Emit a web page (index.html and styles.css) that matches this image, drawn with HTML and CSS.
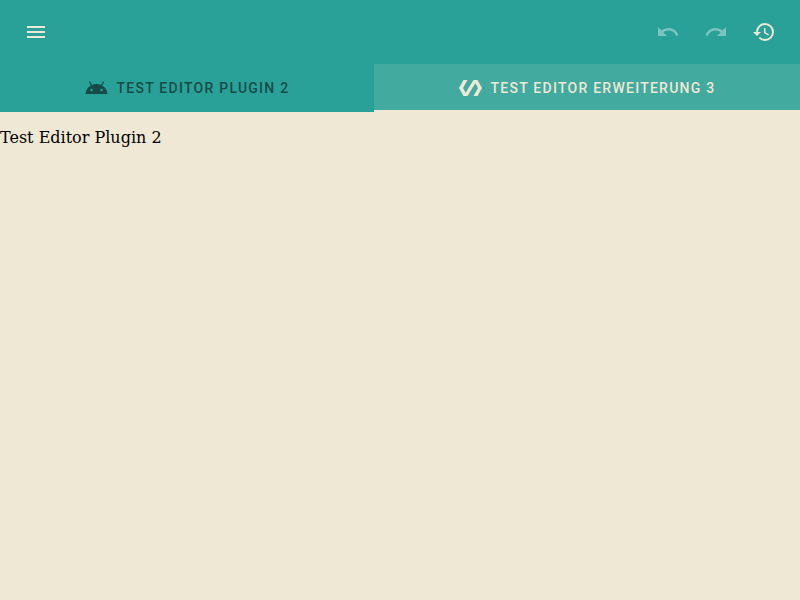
FILE: index.html
```
<!DOCTYPE html>
<html lang="de">
<head>
<meta charset="utf-8">
<title>Editor</title>
<link rel="stylesheet" href="styles.css">
</head>
<body>
<header class="bar">
  <button class="icon-button" aria-label="Menu"><svg viewBox="0 0 24 24"><path d="M3 18h18v-2H3v2zm0-5h18v-2H3v2zm0-7v2h18V6H3z"/></svg></button>
  <div class="actions">
    <button class="icon-button" disabled aria-label="Undo"><svg viewBox="0 0 24 24"><path d="M12.5 8c-2.65 0-5.05.99-6.9 2.6L2 7v9h9l-3.62-3.62c1.39-1.16 3.16-1.88 5.12-1.88 3.54 0 6.55 2.31 7.6 5.5l2.37-.78C21.08 11.03 17.15 8 12.5 8z"/></svg></button>
    <button class="icon-button" disabled aria-label="Redo"><svg viewBox="0 0 24 24"><path d="M18.4 10.6C16.55 8.99 14.15 8 11.5 8c-4.65 0-8.58 3.03-9.96 7.22L3.9 16c1.05-3.19 4.05-5.5 7.6-5.5 1.95 0 3.73.72 5.12 1.88L13 16h9V7l-3.6 3.6z"/></svg></button>
    <button class="icon-button" aria-label="History"><svg viewBox="0 0 24 24"><path d="M13.5 8H12v5l4.28 2.54.72-1.21-3.5-2.08V8M13 3a9 9 0 0 0-9 9H1l3.96 4.03L9 12H6a7 7 0 0 1 7-7 7 7 0 0 1 7 7 7 7 0 0 1-7 7c-1.93 0-3.68-.79-4.94-2.06l-1.42 1.42A8.9 8.9 0 0 0 13 21a9 9 0 0 0 9-9 9 9 0 0 0-9-9"/></svg></button>
  </div>
</header>
<nav class="tabs">
  <button class="tab tab-first"><svg viewBox="0.5 0 24 24"><path d="M17.6 9.48l1.84-3.18c.16-.31.04-.69-.26-.85a.637.637 0 0 0-.83.22l-1.88 3.24a11.463 11.463 0 0 0-8.94 0L5.65 5.67a.643.643 0 0 0-.87-.2c-.28.18-.37.54-.22.83L6.4 9.48A10.78 10.78 0 0 0 1 18h22a10.78 10.78 0 0 0-5.4-8.52zM7 15.25a1.25 1.25 0 1 1 0-2.5 1.25 1.25 0 0 1 0 2.5zm10 0a1.25 1.25 0 1 1 0-2.5 1.25 1.25 0 0 1 0 2.5z"/></svg><span>Test Editor Plugin 2</span></button>
  <button class="tab tab-active"><svg viewBox="-0.5 0 24 24"><path d="M19 4h-4L7.11 16.63 4.5 12 9 4H5L.5 12 5 20h4l7.89-12.63L19.5 12 15 20h4l4.5-8z"/></svg><span>Test Editor Erweiterung 3</span></button>
</nav>
<main class="content">Test Editor Plugin 2</main>
</body>
</html>
```
FILE: styles.css
```
body {
  margin: 0;
  min-height: 100vh;
  background: #eee8d5;
  color: #000;
  font-family: "DejaVu Serif", serif;
  font-size: 16px;
}
button {
  border: 0;
  padding: 0;
  background: none;
  color: #eee8d5;
}
svg {
  display: block;
  width: 24px;
  height: 24px;
  fill: currentColor;
  flex: none;
}
.bar {
  box-sizing: border-box;
  height: 64px;
  padding: 8px 12px;
  display: flex;
  justify-content: space-between;
  align-items: center;
  background: #2aa198;
}
.actions {
  display: flex;
}
.icon-button {
  width: 48px;
  height: 48px;
  padding: 12px;
}
.icon-button:disabled {
  color: rgba(255, 255, 255, .38);
}
.tabs {
  display: flex;
  height: 48px;
  background: #2aa198;
}
.tab {
  box-sizing: border-box;
  flex: 1 0 auto;
  display: flex;
  align-items: center;
  justify-content: center;
  gap: 8px;
  padding: 0 24px;
  font: 500 14px/20px Roboto, sans-serif;
  letter-spacing: 1.25px;
  text-transform: uppercase;
}
.tab-first {
  color: #154c47;
}
.tab-active {
  background: #42aa9f;
  border-bottom: 2px solid #eee8d5;
  padding-top: 2px;
}
.content {
  padding-top: 16px;
  line-height: 19px;
}
```
